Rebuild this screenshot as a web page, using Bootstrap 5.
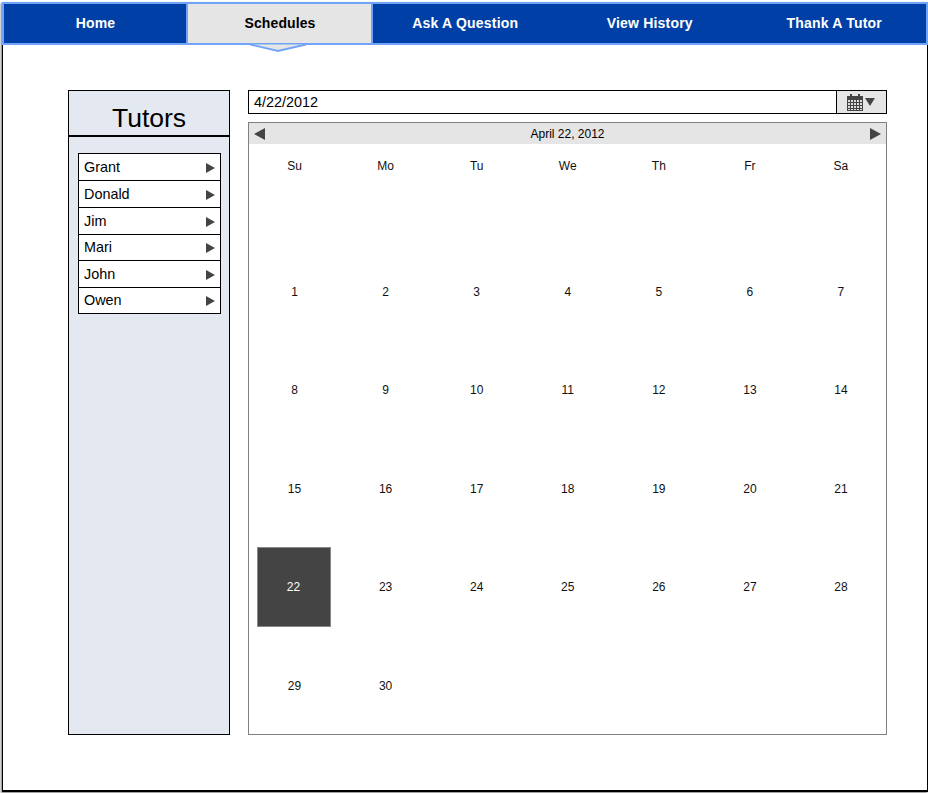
<!doctype html>
<html>
  <head>
    <title>Schedules</title>
    <link href="https://cdn.jsdelivr.net/npm/bootstrap@5.3.2/dist/css/bootstrap.min.css" rel="stylesheet" />
    <style>
      html, body { height: 100%; margin: 0; background: #fff; }
      body { font-family: "Liberation Sans", Arial, sans-serif; color: #000; }
      .page-frame {
        width: 926px; height: 790px; margin-left: 2px;
        border-left: 1px solid #000; border-right: 1px solid #000; border-bottom: 2px solid #000;
        box-shadow: -1px 1px 2px #777;
      }
      .top-tabs { height: 43px; margin: 2px -1px 0; background: #0040a6; border: 2px solid #70a4f8; }
      .top-tab { flex: 0 0 184.5px; color: #fff; font-size: 14px; font-weight: 700; text-decoration: none; letter-spacing: .2px; }
      .top-tab:first-child { flex-basis: 182px; padding-left: 1px; }
      .top-tab.is-active { position: relative; flex-basis: 187px; padding-left: 1px; background: #e5e5e5; color: #000; border-left: 2px solid #70a4f8; border-right: 2px solid #70a4f8; letter-spacing: .1px; }
      .tab-pointer { position: absolute; left: 62px; top: 39px; }
      .content-area { padding: 45px 40px 0 65px; gap: 18px; }
      .tutor-panel { width: 162px; height: 645px; background: #e4e9f1; border: 1px solid #000; }
      .tutor-title { height: 46px; border-bottom: 2px solid #000; font-size: 26.5px; line-height: 55px; text-align: center; }
      .tutor-list { margin: 16px 8px 0 9px; border: 1px solid #000; background: #fff; }
      .tutor-item { height: 27px; padding: 1px 5px 0; font-size: 14.4px; border-bottom: 1px solid #000; }
      .tutor-item:nth-child(4) { height: 26px; }
      .tutor-item:last-child { height: 25px; border-bottom: 0; }
      .arrow-right { width: 0; height: 0; border-left: 9px solid #444; border-top: 5px solid transparent; border-bottom: 5px solid transparent; }
      .arrow-left { width: 0; height: 0; border-right: 11px solid #444; border-top: 6px solid transparent; border-bottom: 6px solid transparent; }
      .arrow-big { border-left-width: 11px; border-top-width: 6px; border-bottom-width: 6px; }
      .cal-column { width: 639px; }
      .date-field { height: 24px; border: 1px solid #000; font-size: 14.4px; }
      .date-value { padding: 1px 0 0 5px; }
      .date-button { width: 50px; padding-right: 2px; background: #e5e5e5; border-left: 1px solid #000; gap: 2px; }
      .arrow-down { width: 0; height: 0; border-top: 8px solid #444; border-left: 5.5px solid transparent; border-right: 5.5px solid transparent; }
      .cal-box { height: 613px; margin-top: 8px; border: 1px solid #808080; }
      .cal-head { height: 21px; background: #e5e5e5; padding: 0 5px; font-size: 12px; }
      .cal-grid { display: grid; grid-template-columns: repeat(7, 1fr); margin-right: -.5px; font-size: 12px; grid-template-rows: 44px 54.6px repeat(4, 98.4px) 100px; }
      .cal-cell { color: #111; }
      .cal-selected { width: 74px; height: 80px; margin-right: 2px; background: #444; border: 1px solid #888; color: #fff; }
      .blank-row { grid-column: 1 / -1; }
    </style>
  </head>
  <body>
    <div class="page-frame">
      <nav class="top-tabs d-flex">
        <a class="top-tab d-flex align-items-center justify-content-center" href="#">Home</a>
        <a class="top-tab is-active d-flex align-items-center justify-content-center" href="#">Schedules
          <svg class="tab-pointer" width="56" height="10" viewBox="0 0 56 10"><path d="M0 1.5 L28 8 L56 1.5" fill="#e5e5e5" stroke="#70a4f8" stroke-width="1.8" /></svg>
        </a>
        <a class="top-tab d-flex align-items-center justify-content-center" href="#">Ask A Question</a>
        <a class="top-tab d-flex align-items-center justify-content-center" href="#">View History</a>
        <a class="top-tab d-flex align-items-center justify-content-center" href="#">Thank A Tutor</a>
      </nav>
      <div class="content-area d-flex">
        <aside class="tutor-panel">
          <div class="tutor-title">Tutors</div>
          <div class="tutor-list">
            <div class="tutor-item d-flex align-items-center justify-content-between">Grant<span class="arrow-right"></span></div>
            <div class="tutor-item d-flex align-items-center justify-content-between">Donald<span class="arrow-right"></span></div>
            <div class="tutor-item d-flex align-items-center justify-content-between">Jim<span class="arrow-right"></span></div>
            <div class="tutor-item d-flex align-items-center justify-content-between">Mari<span class="arrow-right"></span></div>
            <div class="tutor-item d-flex align-items-center justify-content-between">John<span class="arrow-right"></span></div>
            <div class="tutor-item d-flex align-items-center justify-content-between">Owen<span class="arrow-right"></span></div>
          </div>
        </aside>
        <main class="cal-column">
          <div class="date-field d-flex">
            <div class="date-value flex-grow-1 d-flex align-items-center">4/22/2012</div>
            <div class="date-button d-flex align-items-center justify-content-center">
              <svg width="16" height="17" viewBox="0 0 16 17">
                <rect x="0.5" y="2.5" width="15" height="14" fill="#ddd" stroke="#444" />
                <rect x="0" y="2" width="16" height="4" fill="#444" />
                <rect x="3" y="0" width="2" height="4" fill="#444" />
                <rect x="11" y="0" width="2" height="4" fill="#444" />
                <path d="M1 8.5h14M1 11.5h14M1 14.5h14M3.5 6v10M6.5 6v10M9.5 6v10M12.5 6v10" stroke="#444" stroke-width="1" fill="none" />
              </svg>
              <span class="arrow-down"></span>
            </div>
          </div>
          <div class="cal-box">
            <div class="cal-head d-flex align-items-center justify-content-between">
              <span class="arrow-left"></span><span>April 22, 2012</span><span class="arrow-right arrow-big"></span>
            </div>
            <div class="cal-grid" id="calGrid"></div>
          </div>
        </main>
      </div>
    </div>
    <script>
      // build the month from data so the cells stay consistent
      var grid = document.getElementById("calGrid");
      var html = "";
      ["Su", "Mo", "Tu", "We", "Th", "Fr", "Sa"].forEach(function (d) {
        html += '<div class="cal-cell d-flex align-items-center justify-content-center">' + d + "</div>";
      });
      html += '<div class="blank-row"></div>';
      for (var i = 1; i <= 30; i++) {
        var label = i === 22 ? '<span class="cal-selected d-flex align-items-center justify-content-center">22</span>' : i;
        html += '<div class="cal-cell d-flex align-items-center justify-content-center">' + label + "</div>";
      }
      grid.innerHTML = html;
    </script>
    <script src="https://cdn.jsdelivr.net/npm/bootstrap@5.3.2/dist/js/bootstrap.bundle.min.js"></script>
  </body>
</html>
